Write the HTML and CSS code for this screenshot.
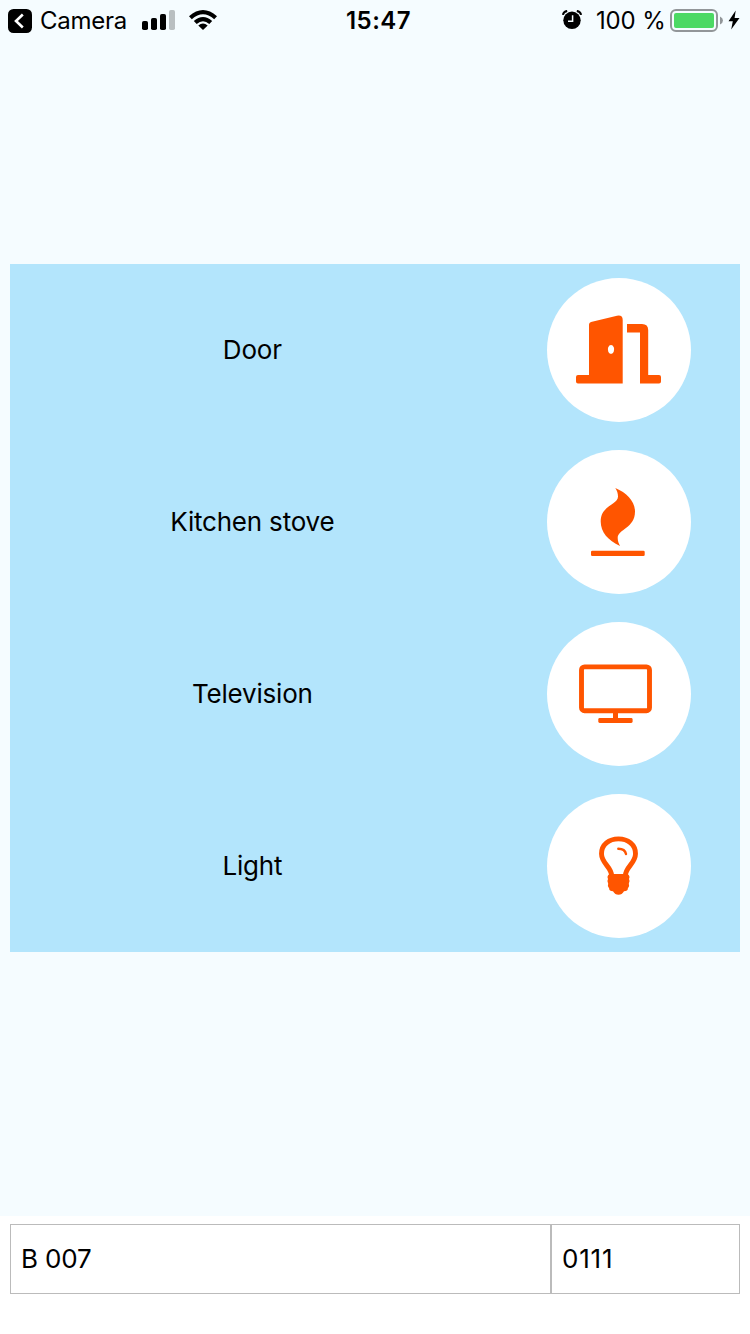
FILE: index.html
```html
<!DOCTYPE html>
<html lang="en">
<head>
<meta charset="utf-8">
<title>Room devices</title>
<link rel="stylesheet" href="styles.css">
</head>
<body>
<div class="screen">
  <header class="status">
    <div class="status-left">
      <svg class="back" width="24" height="24" viewBox="0 0 24 24"><rect width="24" height="24" rx="5.5"/><path d="M14.800 5.500 8 12l6.800 6.500" fill="none" stroke="#fff" stroke-width="2.600"/></svg>
      <span class="camera">Camera</span>
      <svg class="signal" width="34" height="20" viewBox="0 0 34 20"><rect y="11" width="6" height="9" rx="1.800"/><rect x="9" y="8" width="6" height="12" rx="1.800"/><rect x="18" y="4" width="6" height="16" rx="1.800"/><rect x="27" width="6" height="20" rx="1.800" fill="#b9bfc1"/></svg>
      <svg class="wifi" width="28" height="20" viewBox="0 0 28 20"><path d="M0 6.200Q14-6.200 28 6.200L25.200 9.200Q14-.6 2.800 9.200ZM4.800 11Q14 2.800 23.200 11L20.300 14Q14 8.600 7.700 14ZM9.300 15.600Q14 11.600 18.700 15.600L14 20Z"/></svg>
    </div>
    <time class="clock">15:47</time>
    <div class="status-right">
      <svg class="alarm" width="20" height="20" viewBox="0 0 20 20"><circle cx="10" cy="10.300" r="8.700"/><path d="M.9 4.800Q1.500 1.600 5.200.9M19.100 4.800Q18.500 1.600 14.800.9" fill="none" stroke="#000" stroke-width="2"/><path d="M10.600 5.300v6H6" fill="none" stroke="#f5fcff" stroke-width="1.500"/></svg>
      <span class="percent">100 %</span>
      <svg class="battery" width="54" height="24" viewBox="0 0 54 24"><rect x="1" y="1" width="46" height="21" rx="5" fill="none" stroke="#929699" stroke-width="2"/><rect x="4" y="4" width="40" height="15" rx="2" fill="#4cd964"/><path d="M50 7.500Q53 9 53 11.500T50 15.500Z" fill="#929699"/></svg>
      <svg class="bolt" width="12" height="20" viewBox="0 0 12 20"><path d="M7.700.4.500 11.200h4.300L3.200 19.400 11.500 8H6.600Z"/></svg>
    </div>
  </header>
  <main class="content">
    <section class="devices">
      <div class="row"><span class="label">Door</span><div class="action"><button class="knob" aria-label="Door"><svg viewBox="0 0 144 144"><path fill-rule="evenodd" d="M42 97V46.500Q42 44.600 44 44L70 37.700Q75.700 36.700 75.700 42V105.500H31Q29 105.500 29 103.500V99Q29 97 31 97ZM64 67a3.200 4.400 0 1 0 .01 0Z"/><path d="M80 46H95Q101.200 46 101.200 52V97H112Q114 97 114 99V103.500Q114 105.500 112 105.500H93V54.500H80Z"/></svg></button></div></div>
      <div class="row"><span class="label">Kitchen stove</span><div class="action"><button class="knob" aria-label="Kitchen stove"><svg viewBox="0 0 144 144"><path d="M68.300 38C80 43 88 51.500 88 61.500C88 78.500 70.700 79 70.700 88C70.700 91 71.700 93.500 73 96C61 90.500 53.700 82 53.700 71.500C53.700 55 71 55 71 46.500C71 43.500 70 40.500 68.300 38Z"/><rect x="44" y="100.800" width="53.700" height="5.200" rx="1.300"/></svg></button></div></div>
      <div class="row"><span class="label">Television</span><div class="action"><button class="knob" aria-label="Television"><svg viewBox="0 0 144 144"><rect x="34.500" y="44.900" width="68" height="43.800" rx="3" fill="none" stroke="#ff5500" stroke-width="4.900"/><path d="M66 90h5v8h-5z"/><rect x="51.300" y="96" width="34.300" height="5" rx="1.400"/></svg></button></div></div>
      <div class="row"><span class="label">Light</span><div class="action"><button class="knob" aria-label="Light"><svg viewBox="0 0 144 144"><path d="M64.700 82C64.700 73 54.500 69.500 54.500 59.700C54.500 50.700 62 44.900 71.500 44.900S88.500 50.700 88.500 59.700C88.500 69.500 78.300 73 78.300 82" fill="none" stroke="#ff5500" stroke-width="4.900"/><path d="M71.300 54.700Q78 54.700 79 60" fill="none" stroke="#ff5500" stroke-width="2.400" stroke-linecap="round"/><path d="M62.500 80H80.500Q83.500 82 82 85Q83.500 87.500 81.800 89.800Q83 92 80.800 94.500Q81 97.200 77 97.300Q75 100.800 71.500 100.800T66 97.300Q62 97.200 62.200 94.500Q60 92 61.200 89.800Q59.500 87.500 61 85Q59.500 82 62.500 80Z"/></svg></button></div></div>
    </section>
  </main>
  <footer class="fields">
    <input class="field room" value="B 007" aria-label="Room">
    <input class="field code" value="0111" aria-label="Code">
  </footer>
</div>
</body>
</html>
```
FILE: styles.css
```css
* { box-sizing: border-box; }
body { margin: 0; font-family: Inter, "Liberation Sans", sans-serif; color: #000; }
svg { display: block; flex: none; }
.screen { width: 750px; height: 1334px; display: flex; flex-direction: column; background: #f5fcff; overflow: hidden; }
.status { height: 40px; display: grid; grid-template-columns: 1fr auto 1fr; align-items: center; padding: 1px 10px 0 8px; font-size: 24px; line-height: 40px; white-space: nowrap; }
.status-left, .status-right { display: flex; align-items: center; }
.status-right { justify-content: flex-end; }
.camera { margin-left: 8px; width: 94px; letter-spacing: -.25px; }
.signal { margin: 0 0 2px 8px; }
.wifi { margin: 0 0 2px 13px; }
.clock { font-weight: 600; letter-spacing: .5px; padding-left: 9px; }
.alarm { margin-bottom: 2px; }
.percent { margin-left: 14px; width: 74px; letter-spacing: -.15px; }
.battery { margin-right: 4px; }
.bolt { margin-bottom: 2px; }
.content { flex: 1; display: flex; flex-direction: column; padding: 224px 10px 0; }
.devices { background: #b3e5fc; }
.row { height: 172px; display: grid; grid-template-columns: 2fr 1fr; align-items: center; }
.label { text-align: center; font-size: 26px; line-height: 32px; letter-spacing: -.2px; padding-right: 2px; }
.action { display: flex; justify-content: center; padding-left: 1px; }
.knob { width: 144px; height: 144px; padding: 0; border: 0; border-radius: 50%; background: #fff; fill: #ff5500; }
.fields { height: 118px; display: flex; padding: 8px 10px 40px; background: #fff; }
.field { height: 70px; border: 1px solid #bbb; border-radius: 0; background: #fff; padding: 0 10px 2px; font: 26px Inter, "Liberation Sans", sans-serif; color: #000; outline: 0; }
.room { width: 541px; letter-spacing: -.15px; }
.code { width: 189px; letter-spacing: .8px; }
```
